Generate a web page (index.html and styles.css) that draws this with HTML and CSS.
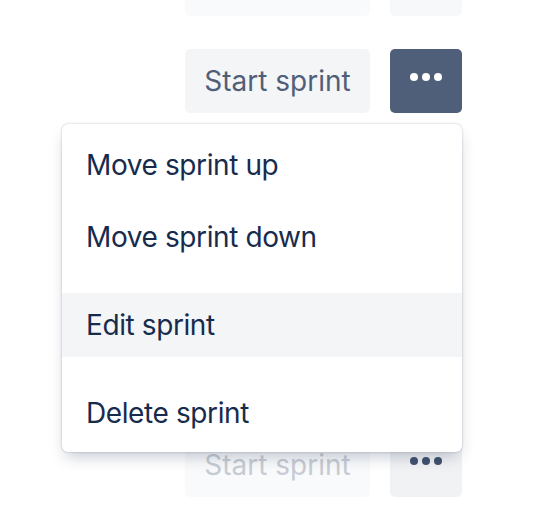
FILE: index.html
```html
<!DOCTYPE html>
<html lang="en-US">
<head>
<meta charset="utf-8">
<title>sprint actions</title>
<link rel="stylesheet" href="styles.css">
</head>
<body>

<div class="board">
	<div class="sprint-row first">
		<button class="btn start disabled" aria-label="Start sprint"></button>
		<button class="btn more faded"></button>
	</div>

	<div class="sprint-row">
		<button class="btn start">Start sprint</button>
		<button class="btn more open"><svg width="32" height="8" viewBox="-4 -4 32 8"><circle cx="0" cy="0" r="4"/><circle cx="12" cy="0" r="4"/><circle cx="24" cy="0" r="4"/></svg></button>
	</div>

	<div class="sprint-row last">
		<button class="btn start disabled">Start sprint</button>
		<button class="btn more"><svg width="32" height="8" viewBox="-4 -4 32 8"><circle cx="0" cy="0" r="4"/><circle cx="12" cy="0" r="4"/><circle cx="24" cy="0" r="4"/></svg></button>
	</div>
</div>

<div id="menu">
	<div class="group first-group">
		<div class="item">Move sprint up</div>
		<div class="item">Move sprint down</div>
	</div>
	<div class="group">
		<div class="item hover">Edit sprint</div>
	</div>
	<div class="group">
		<div class="item">Delete sprint</div>
	</div>
</div>

</body>
</html>
```

FILE: styles.css
```css
body {
    margin: 0;
    background-color: white;
    font-family: Inter, "Liberation Sans", sans-serif;
}
.board {
    display: flex;
    flex-direction: column;
    align-items: flex-end;
    padding-right: 86px;
}
.sprint-row {
    display: flex;
    gap: 20px;
}
.sprint-row.first {
    margin-top: -48px;
    margin-bottom: 33px;
}
.sprint-row.last {
    margin-top: 320px;
}
.btn {
    height: 64px;
    border: none;
    border-radius: 5px;
    padding: 0;
    font-family: inherit;
    font-size: 28px;
    display: flex;
    align-items: center;
    justify-content: center;
}
.start {
    width: 185px;
    background-color: #F4F5F7;
    color: #505F79;
}
.start.disabled {
    background-color: #F9FAFB;
    color: #C7CCD4;
}
.more {
    width: 72px;
    background-color: #F1F2F4;
    fill: #42526E;
    padding-bottom: 8px;
}
.more.faded {
    background-color: #F7F8F9;
}
.more.open {
    background-color: #505F79;
    fill: white;
}
#menu {
    position: absolute;
    top: 124px;
    left: 62px;
    width: 400px;
    padding: 9px 0 7px 0;
    box-sizing: border-box;
    background-color: white;
    border-radius: 6px;
    box-shadow: 0 8px 16px -4px rgba(9,30,66,0.25), 0 0 2px rgba(9,30,66,0.31);
    display: flex;
    flex-direction: column;
    gap: 24px;
}
.first-group {
    display: flex;
    flex-direction: column;
    gap: 8px;
}
.item {
    height: 64px;
    padding: 0 24px;
    display: flex;
    align-items: center;
    font-size: 28px;
    letter-spacing: -0.4px;
    color: #172B4D;
}
.item.hover {
    background-color: #F4F5F7;
}
```
